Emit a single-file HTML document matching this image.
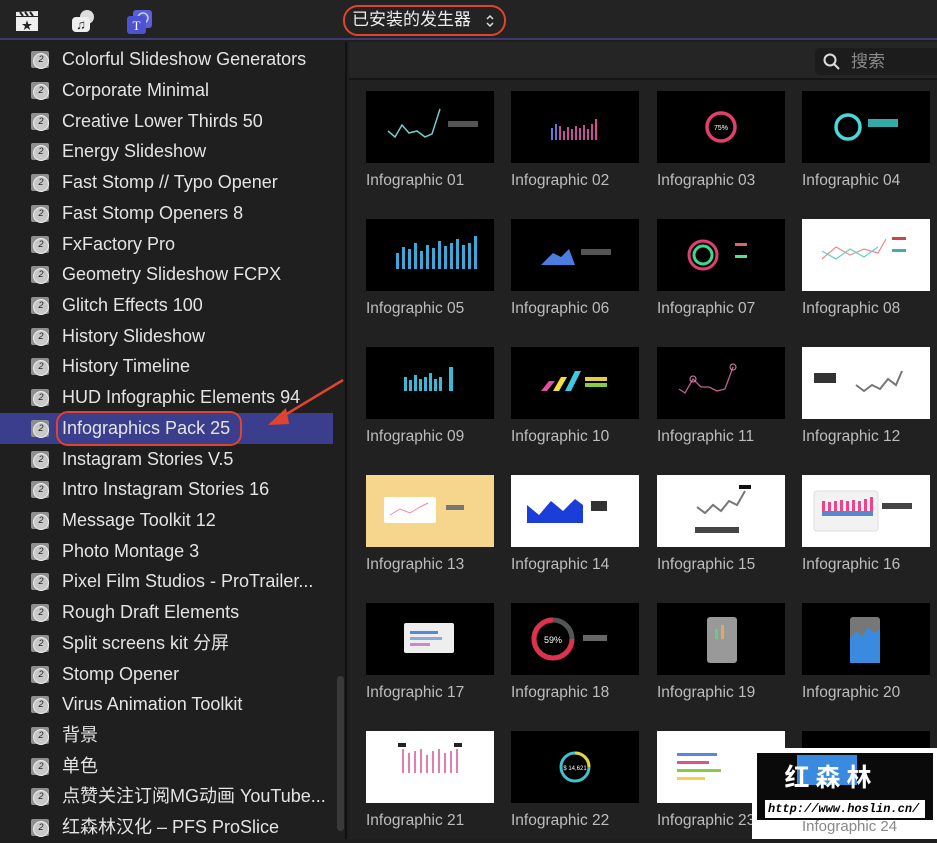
<!DOCTYPE html>
<html><head><meta charset="utf-8"><style>
*{margin:0;padding:0;box-sizing:border-box}
body{width:937px;height:839px;overflow:hidden;background:#1e1e1e;font-family:"Liberation Sans","Noto Sans CJK SC",sans-serif;position:relative;color:#e6e6e6}
.top{position:absolute;left:0;top:0;width:937px;height:40px;background:#232323;border-bottom:2px solid #3d3a6e}
.side{position:absolute;left:0;top:42px;width:347px;height:797px;background:#1f1f1f;border-right:2px solid #111}
.row{position:absolute;left:0;width:333px;height:31px;font-size:18px;line-height:31px;padding-left:62px;white-space:nowrap;color:#e4e4e4}
.row .ic{position:absolute;left:31px;top:7px;width:18px;height:17px;background:#8f8f8f;border-radius:2px}
.row .ic:after{content:"2";position:absolute;left:2px;top:1.5px;width:14px;height:14px;border:1.5px solid #eee;border-radius:50%;font-size:9px;line-height:11px;text-align:center;color:#222;background:#c8c8c8}
.sel{background:#3a3e8c}
.main{position:absolute;left:349px;top:42px;right:0;bottom:0;background:#212121}
.hdr{position:absolute;left:349px;top:42px;right:0;height:38px;background:#252525;border-bottom:2px solid #151515}
.th{position:absolute;width:128px;height:72px;background:#000;overflow:hidden}
.lb{position:absolute;font-size:15.5px;color:#bdbdbd;white-space:nowrap}
</style></head><body>
<div class="top">
 <svg style="position:absolute;left:15px;top:10px" width="24" height="22"><rect x="1" y="7" width="22" height="14" fill="#eee"/><path d="M1 2l22-1v5H1z" fill="#eee"/><path d="M5 2l3 4M10 2l3 4M15 2l3 4" stroke="#232323" stroke-width="2"/><text x="12" y="19" font-size="11" text-anchor="middle" fill="#222">★</text></svg>
 <svg style="position:absolute;left:70px;top:9px" width="26" height="24"><circle cx="17" cy="8" r="7" fill="#ddd"/><rect x="2" y="8" width="18" height="15" rx="4" fill="#eee"/><text x="11" y="20" font-size="13" text-anchor="middle" fill="#222">♫</text></svg>
 <svg style="position:absolute;left:126px;top:9px" width="28" height="26"><rect x="7" y="1" width="19" height="18" rx="3" fill="#5a5ed8"/><circle cx="17" cy="9" r="5" fill="none" stroke="#ccd" stroke-width="1.5"/><rect x="1" y="7" width="19" height="18" rx="3" fill="#4d52d0"/><text x="10.5" y="21" font-size="13" font-family="Liberation Serif" text-anchor="middle" fill="#fff">T</text></svg>
 <div style="position:absolute;left:343px;top:5px;width:163px;height:31px;border:2.5px solid #e0442c;border-radius:15px;font-size:17px;line-height:26px;padding-left:7px;color:#eee">已安装的发生器</div>
 <svg style="position:absolute;left:485px;top:13px" width="10" height="16"><path d="M2 6l3-3 3 3M2 10l3 3 3-3" stroke="#ddd" stroke-width="1.5" fill="none"/></svg>
</div>
<div class="side">
<div class="row" style="top:2px"><i class="ic"></i>Colorful Slideshow Generators</div>
<div class="row" style="top:33px"><i class="ic"></i>Corporate Minimal</div>
<div class="row" style="top:64px"><i class="ic"></i>Creative Lower Thirds 50</div>
<div class="row" style="top:94px"><i class="ic"></i>Energy Slideshow</div>
<div class="row" style="top:125px"><i class="ic"></i>Fast Stomp // Typo Opener</div>
<div class="row" style="top:156px"><i class="ic"></i>Fast Stomp Openers 8</div>
<div class="row" style="top:187px"><i class="ic"></i>FxFactory Pro</div>
<div class="row" style="top:217px"><i class="ic"></i>Geometry Slideshow FCPX</div>
<div class="row" style="top:248px"><i class="ic"></i>Glitch Effects 100</div>
<div class="row" style="top:279px"><i class="ic"></i>History Slideshow</div>
<div class="row" style="top:309px"><i class="ic"></i>History Timeline</div>
<div class="row" style="top:340px"><i class="ic"></i>HUD Infographic Elements 94</div>
<div class="row sel" style="top:371px"><i class="ic"></i>Infographics Pack 25</div>
<div class="row" style="top:402px"><i class="ic"></i>Instagram Stories V.5</div>
<div class="row" style="top:432px"><i class="ic"></i>Intro Instagram Stories 16</div>
<div class="row" style="top:463px"><i class="ic"></i>Message Toolkit 12</div>
<div class="row" style="top:494px"><i class="ic"></i>Photo Montage 3</div>
<div class="row" style="top:524px"><i class="ic"></i>Pixel Film Studios - ProTrailer...</div>
<div class="row" style="top:555px"><i class="ic"></i>Rough Draft Elements</div>
<div class="row" style="top:586px"><i class="ic"></i>Split screens kit 分屏</div>
<div class="row" style="top:617px"><i class="ic"></i>Stomp Opener</div>
<div class="row" style="top:647px"><i class="ic"></i>Virus Animation Toolkit</div>
<div class="row" style="top:678px"><i class="ic"></i>背景</div>
<div class="row" style="top:709px"><i class="ic"></i>单色</div>
<div class="row" style="top:739px"><i class="ic"></i>点赞关注订阅MG动画 YouTube...</div>
<div class="row" style="top:770px"><i class="ic"></i>红森林汉化 – PFS ProSlice</div>
<div style="position:absolute;left:56px;top:369px;width:186px;height:35px;border:2.5px solid #e0442c;border-radius:12px"></div>
<div style="position:absolute;left:337px;top:634px;width:7px;height:155px;background:#3a3a3a;border-radius:4px"></div>
</div>
<div class="main"></div>
<div class="hdr"><div style="position:absolute;left:466px;top:6px;width:130px;height:27px;background:#1c1c1c;border-radius:5px;font-size:17px;color:#8a8a8a;line-height:27px;padding-left:36px">搜索</div>
<svg style="position:absolute;left:474px;top:11px" width="18" height="18"><circle cx="7" cy="7" r="5.5" stroke="#ddd" stroke-width="2" fill="none"/><path d="M11 11l5 5" stroke="#ddd" stroke-width="2"/></svg></div>

<div class="th" style="left:366px;top:91px"><svg width="128" height="72"><polyline points="22,40 29,46 36,34 43,42 51,40 59,46 66,43 74,18" fill="none" stroke="#7cc" stroke-width="1.5"/><rect x="82" y="30" width="30" height="6" fill="#555"/></svg></div>
<div class="lb" style="left:366px;top:172px">Infographic 01</div>
<div class="th" style="left:511px;top:91px"><svg width="128" height="72"><g fill="#c4509a"><rect x="40" y="37" width="2" height="12" fill="#5a7ee0"/><rect x="44" y="33" width="2" height="16" fill="#6a70d8"/><rect x="48" y="35" width="2" height="14"/><rect x="52" y="40" width="2" height="9"/><rect x="56" y="36" width="2" height="13"/><rect x="60" y="38" width="2" height="11"/><rect x="64" y="35" width="2" height="14"/><rect x="68" y="37" width="2" height="12"/><rect x="72" y="34" width="2" height="15"/><rect x="76" y="38" width="2" height="11"/><rect x="80" y="33" width="2" height="16"/><rect x="84" y="28" width="2" height="21" fill="#e04890"/></g></svg></div>
<div class="lb" style="left:511px;top:172px">Infographic 02</div>
<div class="th" style="left:657px;top:91px"><svg width="128" height="72"><circle cx="64" cy="36" r="14" fill="none" stroke="#e0406a" stroke-width="3.5"/><text x="64" y="39" font-size="7" fill="#fff" text-anchor="middle">75%</text></svg></div>
<div class="lb" style="left:657px;top:172px">Infographic 03</div>
<div class="th" style="left:802px;top:91px"><svg width="128" height="72"><circle cx="46" cy="36" r="12" fill="none" stroke="#4ad8d8" stroke-width="3.5"/><rect x="66" y="28" width="30" height="8" fill="#3aa"/></svg></div>
<div class="lb" style="left:802px;top:172px">Infographic 04</div>

<div class="th" style="left:366px;top:219px"><svg width="128" height="72"><g fill="#3aa8d8"><rect x="30" y="34" width="3" height="16"/><rect x="36" y="28" width="3" height="22"/><rect x="42" y="30" width="3" height="20"/><rect x="48" y="24" width="3" height="26"/><rect x="54" y="32" width="3" height="18"/><rect x="60" y="26" width="3" height="24"/><rect x="66" y="29" width="3" height="21"/><rect x="72" y="22" width="3" height="28"/><rect x="78" y="27" width="3" height="23"/><rect x="84" y="24" width="3" height="26"/><rect x="90" y="20" width="3" height="30"/><rect x="96" y="26" width="3" height="24"/><rect x="102" y="24" width="3" height="26"/><rect x="108" y="17" width="3" height="33"/></g></svg></div>
<div class="lb" style="left:366px;top:300px">Infographic 05</div>
<div class="th" style="left:511px;top:219px"><svg width="128" height="72"><path d="M30 46L42 34 50 38 58 30 64 46Z" fill="#4a7ee0"/><rect x="70" y="30" width="30" height="6" fill="#555"/></svg></div>
<div class="lb" style="left:511px;top:300px">Infographic 06</div>
<div class="th" style="left:657px;top:219px"><svg width="128" height="72"><circle cx="46" cy="36" r="14" fill="none" stroke="#e04070" stroke-width="3"/><circle cx="46" cy="36" r="9" fill="none" stroke="#40d890" stroke-width="3"/><rect x="78" y="24" width="12" height="3" fill="#d66"/><rect x="78" y="36" width="12" height="3" fill="#5d9"/></svg></div>
<div class="lb" style="left:657px;top:300px">Infographic 07</div>
<div class="th" style="left:802px;top:219px;background:#fff"><svg width="128" height="72"><polyline points="20,40 34,28 48,36 62,30 76,34 84,20" fill="none" stroke="#e88" stroke-width="1.2"/><polyline points="20,32 34,40 48,30 62,38 76,28" fill="none" stroke="#6cc" stroke-width="1.2"/><rect x="90" y="18" width="14" height="3" fill="#c44"/><rect x="90" y="30" width="14" height="3" fill="#4aa"/></svg></div>
<div class="lb" style="left:802px;top:300px">Infographic 08</div>

<div class="th" style="left:366px;top:347px"><svg width="128" height="72"><g fill="#3ab8d8"><rect x="38" y="30" width="3" height="14"/><rect x="43" y="33" width="3" height="11"/><rect x="48" y="28" width="3" height="16"/><rect x="53" y="32" width="3" height="12"/><rect x="58" y="30" width="3" height="14"/><rect x="63" y="26" width="3" height="18"/><rect x="68" y="32" width="3" height="12"/><rect x="73" y="30" width="3" height="14"/><rect x="83" y="20" width="4" height="24"/></g></svg></div>
<div class="lb" style="left:366px;top:428px">Infographic 09</div>
<div class="th" style="left:511px;top:347px"><svg width="128" height="72"><path d="M30 44l8-10h6l-8 10z" fill="#e050a0"/><path d="M42 44l8-14h6l-8 14z" fill="#f0e040"/><path d="M54 44l10-20h6l-10 20z" fill="#40c8e0"/><rect x="74" y="30" width="22" height="4" fill="#e0d040"/><rect x="74" y="36" width="22" height="4" fill="#8c4"/></svg></div>
<div class="lb" style="left:511px;top:428px">Infographic 10</div>
<div class="th" style="left:657px;top:347px"><svg width="128" height="72"><polyline points="22,42 28,46 36,32 44,40 52,40 60,44 68,42 76,20" fill="none" stroke="#c06090" stroke-width="1.3"/><circle cx="36" cy="32" r="3" fill="none" stroke="#d8a"/><circle cx="76" cy="20" r="3" fill="none" stroke="#d8a"/></svg></div>
<div class="lb" style="left:657px;top:428px">Infographic 11</div>
<div class="th" style="left:802px;top:347px;background:#fff"><svg width="128" height="72"><rect x="12" y="26" width="22" height="10" fill="#333"/><polyline points="54,38 62,44 70,38 78,42 86,32 94,38 100,24" fill="none" stroke="#777" stroke-width="2"/></svg></div>
<div class="lb" style="left:802px;top:428px">Infographic 12</div>

<div class="th" style="left:366px;top:475px;background:#f6d68c"><svg width="128" height="72"><rect x="18" y="22" width="52" height="26" fill="#fff" rx="2"/><polyline points="24,40 34,34 44,38 54,32 62,28" fill="none" stroke="#e8a" stroke-width="1"/><rect x="80" y="30" width="18" height="5" fill="#777"/></svg></div>
<div class="lb" style="left:366px;top:556px">Infographic 13</div>
<div class="th" style="left:511px;top:475px;background:#fff"><svg width="128" height="72"><path d="M16 48V30l12 10 12-14 12 10 12-12 8 6v18z" fill="#1c3ed8"/><rect x="80" y="26" width="16" height="10" fill="#333"/></svg></div>
<div class="lb" style="left:511px;top:556px">Infographic 14</div>
<div class="th" style="left:657px;top:475px;background:#fff"><svg width="128" height="72"><polyline points="40,32 48,38 56,30 64,36 72,26 80,30 88,16" fill="none" stroke="#777" stroke-width="2"/><rect x="82" y="10" width="12" height="4" fill="#111"/><rect x="38" y="52" width="44" height="6" fill="#444"/></svg></div>
<div class="lb" style="left:657px;top:556px">Infographic 15</div>
<div class="th" style="left:802px;top:475px;background:#fff"><svg width="128" height="72"><rect x="12" y="16" width="64" height="40" fill="#f2f2f2" stroke="#ddd" rx="3"/><g fill="#e48"><rect x="20" y="26" width="3" height="10"/><rect x="26" y="27" width="3" height="9"/><rect x="32" y="26" width="3" height="10"/><rect x="38" y="25" width="3" height="11"/><rect x="44" y="26" width="3" height="10"/><rect x="50" y="25" width="3" height="11"/><rect x="56" y="26" width="3" height="10"/><rect x="62" y="24" width="3" height="12"/><rect x="68" y="22" width="3" height="14"/></g><rect x="20" y="36" width="51" height="5" fill="#58c"/><rect x="80" y="28" width="30" height="6" fill="#444"/></svg></div>
<div class="lb" style="left:802px;top:556px">Infographic 16</div>

<div class="th" style="left:366px;top:603px"><svg width="128" height="72"><rect x="38" y="20" width="50" height="30" fill="#eee" rx="2"/><rect x="44" y="28" width="28" height="3" fill="#58d"/><rect x="44" y="34" width="32" height="3" fill="#8ad"/><rect x="44" y="40" width="20" height="3" fill="#c8c"/></svg></div>
<div class="lb" style="left:366px;top:684px">Infographic 17</div>
<div class="th" style="left:511px;top:603px"><svg width="128" height="72"><circle cx="42" cy="36" r="19" fill="none" stroke="#555" stroke-width="5"/><path d="M42 17A19 19 0 1 0 61 36" fill="none" stroke="#e03050" stroke-width="5"/><text x="42" y="40" font-size="9" fill="#fff" text-anchor="middle">59%</text><rect x="72" y="32" width="24" height="6" fill="#666"/></svg></div>
<div class="lb" style="left:511px;top:684px">Infographic 18</div>
<div class="th" style="left:657px;top:603px"><svg width="128" height="72"><rect x="50" y="14" width="30" height="46" fill="#999" rx="3"/><rect x="58" y="26" width="3" height="10" fill="#6c8"/><rect x="64" y="22" width="3" height="14" fill="#da6"/></svg></div>
<div class="lb" style="left:657px;top:684px">Infographic 19</div>
<div class="th" style="left:802px;top:603px"><svg width="128" height="72"><rect x="48" y="14" width="30" height="46" fill="#777" rx="3"/><path d="M48 60V36l6-8 6 6 6-10 6 6 6-4v34z" fill="#3a8ae0"/></svg></div>
<div class="lb" style="left:802px;top:684px">Infographic 20</div>

<div class="th" style="left:366px;top:731px;background:#fff"><svg width="128" height="72"><g fill="#e080b0"><rect x="36" y="18" width="2" height="24"/><rect x="42" y="22" width="2" height="20"/><rect x="48" y="20" width="2" height="22"/><rect x="54" y="18" width="2" height="24"/><rect x="60" y="24" width="2" height="18"/><rect x="66" y="20" width="2" height="22"/><rect x="72" y="18" width="2" height="24"/><rect x="78" y="22" width="2" height="20"/><rect x="84" y="20" width="2" height="22"/><rect x="90" y="18" width="2" height="24"/></g><rect x="32" y="12" width="8" height="4" fill="#222"/><rect x="88" y="12" width="8" height="4" fill="#222"/></svg></div>
<div class="lb" style="left:366px;top:812px">Infographic 21</div>
<div class="th" style="left:511px;top:731px"><svg width="128" height="72"><circle cx="64" cy="36" r="14" fill="none" stroke="#40c0d0" stroke-width="3"/><path d="M64 22A14 14 0 0 1 78 36" stroke="#e8d040" stroke-width="3" fill="none"/><text x="64" y="39" font-size="6" fill="#fff" text-anchor="middle">$ 14,621</text></svg></div>
<div class="lb" style="left:511px;top:812px">Infographic 22</div>
<div class="th" style="left:657px;top:731px;background:#fff"><svg width="128" height="72"><rect x="20" y="22" width="40" height="3" fill="#58d"/><rect x="20" y="30" width="32" height="3" fill="#d58"/><rect x="20" y="38" width="44" height="3" fill="#8c4"/><rect x="20" y="46" width="28" height="3" fill="#fc4"/></svg></div>
<div class="lb" style="left:657px;top:812px">Infographic 23</div>
<div class="th" style="left:802px;top:731px"><svg width="128" height="72"><path d="M20 20v30h50V20l-10 14-8-6-12 10z" fill="#3a8ae0"/></svg></div>
<div class="lb" style="left:802px;top:812px">Infographic 24</div>

<svg style="position:absolute;left:260px;top:375px" width="90" height="55"><path d="M83 5L20 43" stroke="#e0442c" stroke-width="2.5"/><path d="M8 50L26 33 29 49Z" fill="#e0442c"/></svg>

<div style="position:absolute;left:752px;top:748px;width:185px;height:91px;background:#fff"></div>
<div style="position:absolute;left:757px;top:753px;width:176px;height:67px;background:#0a0a0a"><div style="position:absolute;left:40px;top:2px;width:60px;height:30px;background:#3a8ae0"></div></div>
<div style="position:absolute;left:756px;top:758px;width:150px;text-align:center;font-size:25px;font-weight:bold;color:#fff;letter-spacing:6px">红森林</div>
<div style="position:absolute;left:765px;top:800px;width:160px;height:18px;background:#fff;color:#000;font-family:'Liberation Mono',monospace;font-size:12px;font-style:italic;font-weight:bold;line-height:18px;padding-left:3px;overflow:hidden;white-space:nowrap">http://www.hoslin.cn/</div>
<div style="position:absolute;left:802px;top:818px;font-size:15px;color:#888">Infographic 24</div>
</body></html>
